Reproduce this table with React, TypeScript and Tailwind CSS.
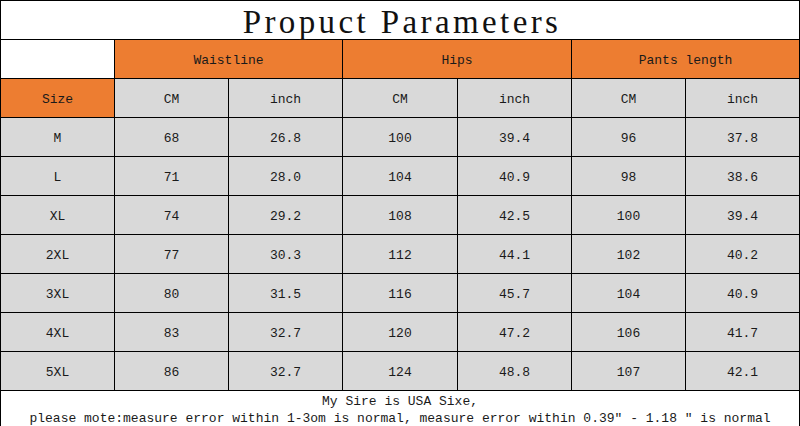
import React from "react";

const rows = [
  ["M", "68", "26.8", "100", "39.4", "96", "37.8"],
  ["L", "71", "28.0", "104", "40.9", "98", "38.6"],
  ["XL", "74", "29.2", "108", "42.5", "100", "39.4"],
  ["2XL", "77", "30.3", "112", "44.1", "102", "40.2"],
  ["3XL", "80", "31.5", "116", "45.7", "104", "40.9"],
  ["4XL", "83", "32.7", "120", "47.2", "106", "41.7"],
  ["5XL", "86", "32.7", "124", "48.8", "107", "42.1"],
];

const cell = "flex items-center justify-center text-[13px] text-[#1a1a1a] pt-[3px]";

export default function App() {
  return (
    <div
      className="w-[800px] h-[426px] bg-black pt-px px-px overflow-hidden"
      style={{ fontFamily: '"Liberation Mono", "DejaVu Sans Mono", monospace' }}
    >
      <div className="grid grid-cols-[113px_113px_113px_114px_113px_113px_113px] grid-rows-[repeat(10,38px)_35px] gap-px">
        <div
          className="col-span-7 bg-white flex items-center justify-center text-[33px] leading-none tracking-[3.4px] text-[#111] pt-[5px] pl-[4px]"
          style={{ fontFamily: '"Liberation Serif", "DejaVu Serif", serif' }}
        >
          Propuct Parameters
        </div>
        <div className="bg-white" />
        <div className={`col-span-2 bg-[#ED7D31] ${cell}`}>Waistline</div>
        <div className={`col-span-2 bg-[#ED7D31] ${cell}`}>Hips</div>
        <div className={`col-span-2 bg-[#ED7D31] ${cell}`}>Pants length</div>
        <div className={`bg-[#ED7D31] ${cell}`}>Size</div>
        {["CM", "inch", "CM", "inch", "CM", "inch"].map((t, i) => (
          <div key={i} className={`bg-[#D9D9D9] ${cell}`}>
            {t}
          </div>
        ))}
        {rows.map((r, ri) =>
          r.map((v, ci) => (
            <div key={`${ri}-${ci}`} className={`bg-[#D9D9D9] ${cell}`}>
              {v}
            </div>
          ))
        )}
        <div className="col-span-7 bg-white flex flex-col items-center justify-center text-[13px] leading-[17px] text-[#1a1a1a] whitespace-pre pt-[2px]">
          <div>My Sire is USA Sixe,</div>
          <div>please mote:measure error within 1-3om is normal, measure error within 0.39″ - 1.18 ″ is normal</div>
        </div>
      </div>
    </div>
  );
}
